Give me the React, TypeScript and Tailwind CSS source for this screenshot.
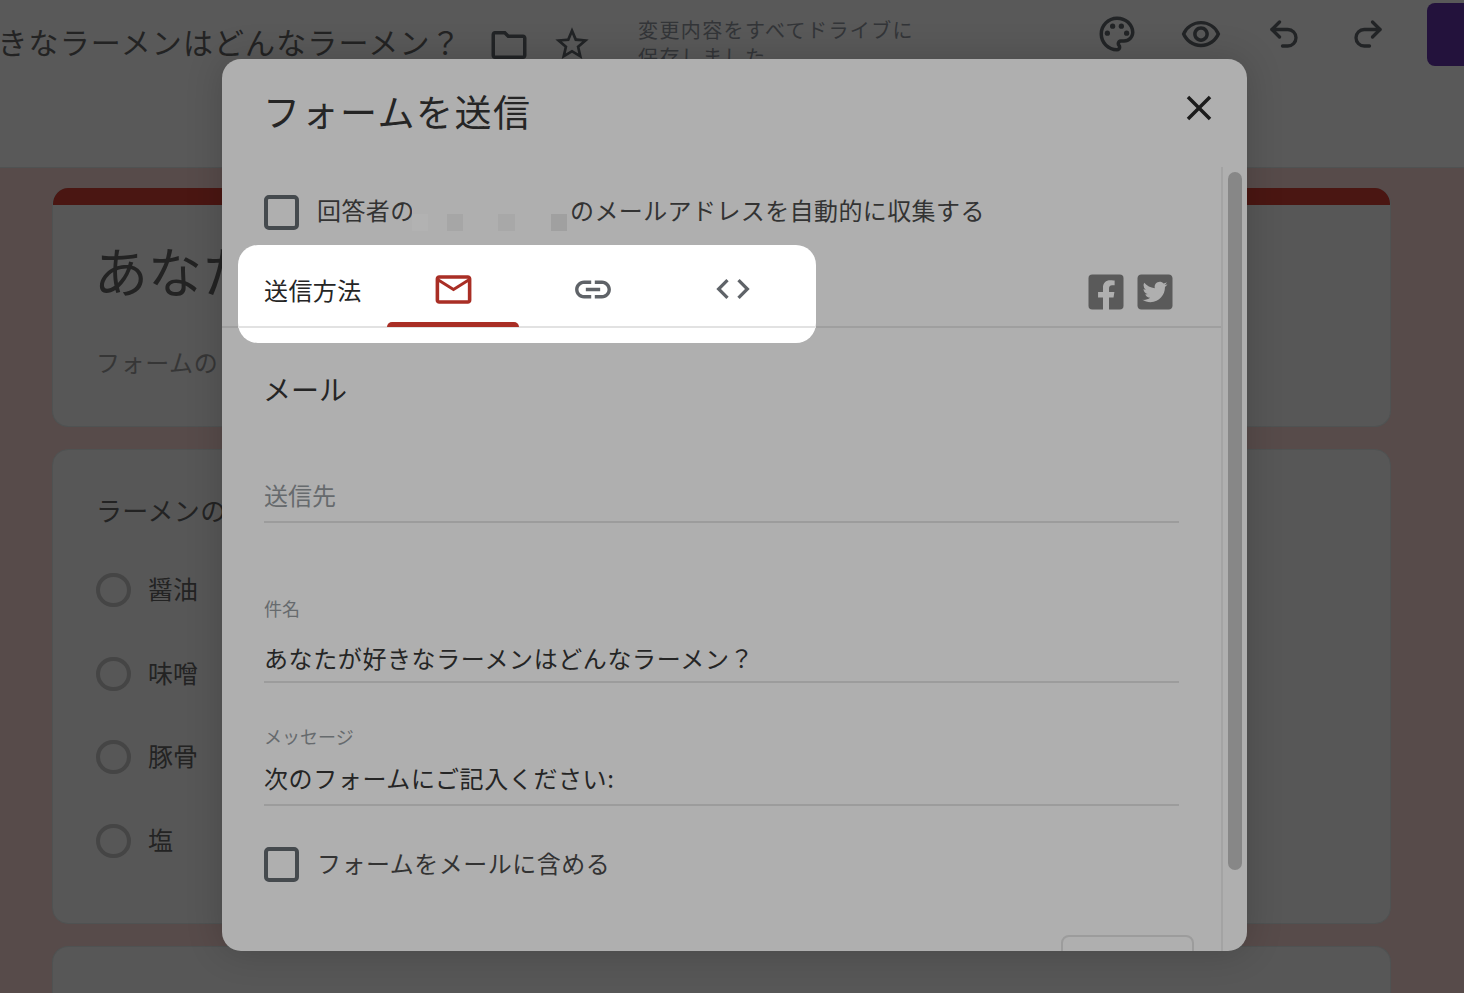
import React from 'react';
import { Redo2, Undo2 } from 'lucide-react';
import {
  MdClose,
  MdCode,
  MdLink,
  MdMailOutline,
  MdOutlineFolder,
  MdOutlinePalette,
  MdOutlineRemoveRedEye,
  MdStarBorder,
} from 'react-icons/md';
import { FaFacebookSquare, FaTwitterSquare } from 'react-icons/fa';

const options = ['醤油', '味噌', '豚骨', '塩'];

const Checkbox = () => (
  <div className="w-[35px] h-[35px] shrink-0 rounded-[5px] border-[4px] border-[#454a4e]" />
);

const Header = () => (
  <header className="h-[168px] shrink-0 bg-[#595959] border-b border-[#4f5252] flex items-start overflow-hidden text-[#232323]">
    <h1 className="w-[614px] shrink-0 ml-[-158px] mt-[21px] text-[30px] leading-[40px] tracking-[1.1px] whitespace-nowrap">
      あなたが好きなラーメンはどんなラーメン？
    </h1>
    <MdOutlineFolder size={42} className="shrink-0 ml-[32px] mt-[24px] text-[#222426]" />
    <MdStarBorder size={40} className="shrink-0 ml-[22px] mt-[24px] text-[#222426]" />
    <p className="w-[280px] shrink-0 ml-[46px] mt-[16px] text-[20px] leading-[27px] tracking-[1.4px] text-[#333538]">
      変更内容をすべてドライブに保存しました
    </p>
    <div className="ml-[178px] mt-[13px] flex items-center gap-[41.5px] text-[#222426]">
      <MdOutlinePalette size={42} />
      <MdOutlineRemoveRedEye size={42} />
      <Undo2 size={36} strokeWidth={2.2} className="mx-[3px]" />
      <Redo2 size={36} strokeWidth={2.2} className="mx-[3px]" />
    </div>
    <div className="w-[37px] h-[63px] ml-auto mt-[3px] shrink-0 rounded-l-[8px] bg-[#23123c]" />
  </header>
);

const Page = () => (
  <main className="flex-1 bg-[#574b4a] pt-[20px] pl-[52px] text-[#232323]">
    <section className="w-[1339px] h-[239px] rounded-[16px] overflow-hidden bg-[#575757] border-x border-b border-[#4f5252]">
      <div className="h-[17px] bg-[#4a1612]" />
      <h2 className="ml-[41px] mt-[33px] text-[54px] leading-[64px] whitespace-nowrap">あなたが好き</h2>
      <p className="ml-[43px] mt-[44px] text-[24px] leading-[32px] tracking-[0.6px] text-[#363636]">
        フォームの
      </p>
    </section>
    <section className="w-[1339px] h-[475px] mt-[22px] rounded-[16px] bg-[#575757] border border-[#4f5252] pl-[43px] pt-[42px]">
      <h3 className="text-[26px] leading-[36px] tracking-[0.3px] whitespace-nowrap">ラーメンの</h3>
      <div className="mt-[45px] flex flex-col gap-[49.5px]">
        {options.map((option) => (
          <div key={option} className="h-[34px] flex items-center gap-[17px]">
            <div className="w-[35px] h-[34px] rounded-full border-[4px] border-[#454545]" />
            <span className="pb-[4px] text-[25px] leading-[34px]">{option}</span>
          </div>
        ))}
      </div>
    </section>
    <section className="w-[1339px] h-[60px] mt-[22px] rounded-t-[16px] bg-[#575757] border-x border-t border-[#4f5252]" />
  </main>
);

const Field = ({
  label,
  value,
  className,
  valueClassName,
}: {
  label: string;
  value: string;
  className: string;
  valueClassName: string;
}) => (
  <div className={className}>
    <div className="text-[18px] leading-[24px] text-[#666a6d]">{label}</div>
    <div className={`border-b-2 border-[#9c9c9c] text-[24px] leading-[34px] tracking-[0.6px] text-[#252525] ${valueClassName}`}>
      {value}
    </div>
  </div>
);

const Dialog = () => (
  <div className="absolute left-[222px] top-[59px] w-[1025px] h-[892px] rounded-[19px] overflow-hidden bg-[#afafaf] shadow-[0_0_36px_rgba(0,0,0,0.18)] flex flex-col text-[#252525]">
    <div className="h-[108px] shrink-0 flex items-start justify-between pl-[41px] pr-[27px]">
      <h2 className="mt-[28px] text-[37px] leading-[48px] tracking-[1.5px]">フォームを送信</h2>
      <MdClose size={42} className="mt-[28px] text-[#1c1c1c]" />
    </div>
    <div className="flex-1 flex min-h-0">
      <div className="w-[1001px] shrink-0 border-r-2 border-[#a3a3a3] overflow-hidden">
        <div className="h-[35px] flex items-center pl-[42px] mt-[28px]">
          <Checkbox />
          <span className="ml-[18px] pb-[5px] w-[95px] overflow-hidden whitespace-nowrap text-[24px] leading-[34px] tracking-[0.4px] text-[#333]">
            回答者の
          </span>
          <div className="w-[158px] h-[34px] flex items-start">
            <div className="mt-[18px] w-[16px] h-[17px] bg-[#b2b2b2]" />
            <div className="mt-[18px] ml-[19px] w-[16px] h-[17px] bg-[#a6a6a6]" />
            <div className="mt-[18px] ml-[35px] w-[17px] h-[17px] bg-[#a8a8a8]" />
            <div className="mt-[18px] ml-[36px] w-[16px] h-[17px] bg-[#a0a0a0]" />
          </div>
          <span className="pb-[5px] whitespace-nowrap text-[24px] leading-[34px] tracking-[0.4px] text-[#333]">
            のメールアドレスを自動的に収集する
          </span>
        </div>
        <div className="h-[98px] border-b-2 border-[#9f9f9f] flex items-start justify-end gap-[9px] pr-[46px] pt-[42px] text-[#5a5a5a]">
          <FaFacebookSquare size={40} />
          <FaTwitterSquare size={40} />
        </div>
        <div className="px-[42px]">
          <h3 className="mt-[42px] -ml-[1px] text-[28px] leading-[38px]">メール</h3>
          <div className="mt-[67px] border-b-2 border-[#9c9c9c] text-[24px] leading-[40px] pb-[6px] text-[#666a6d]">
            送信先
          </div>
          <Field
            label="件名"
            value="あなたが好きなラーメンはどんなラーメン？"
            className="mt-[73px]"
            valueClassName="mt-[21px] pb-[6px]"
          />
          <Field
            label="メッセージ"
            value="次のフォームにご記入ください:"
            className="mt-[41px]"
            valueClassName="mt-[13px] pb-[9px]"
          />
          <div className="h-[35px] flex items-center mt-[41px]">
            <Checkbox />
            <span className="ml-[18px] pb-[4px] text-[24px] leading-[34px] tracking-[0.5px] text-[#333]">
              フォームをメールに含める
            </span>
          </div>
        </div>
        <div className="flex justify-end pr-[27px] mt-[53px]">
          <div className="w-[133px] h-[60px] rounded-[8px] border-2 border-[#9c9c9c]" />
        </div>
      </div>
      <div className="flex-1 pt-[5px] pl-[5px]">
        <div className="w-[14px] h-[698px] rounded-full bg-[#878787]" />
      </div>
    </div>
  </div>
);

const SendTabs = () => (
  <div className="absolute left-[238px] top-[245px] w-[578px] h-[98px] rounded-[20px] bg-white text-[#252525]">
    <div className="h-[83px] border-b-2 border-[#e2e2e2] flex items-start pl-[26px]">
      <span className="w-[119px] mt-[28px] text-[24px] leading-[34px] tracking-[0.4px]">送信方法</span>
      <div className="flex flex-col items-center w-[140px]">
        <MdMailOutline size={43} className="mt-[23px] text-[#a92e25]" />
        <div className="mt-[11px] w-[132px] h-[5px] rounded-t-[5px] bg-[#a92e25]" />
      </div>
      <MdLink size={43} className="w-[140px] mt-[23px] text-[#5f6368]" />
      <MdCode size={40} className="w-[140px] mt-[24px] text-[#5f6368]" />
    </div>
  </div>
);

export default function App() {
  return (
    <div className="relative w-[1464px] h-[993px] overflow-hidden flex flex-col font-['Noto_Sans_CJK_JP','Liberation_Sans',sans-serif]">
      <Header />
      <Page />
      <Dialog />
      <SendTabs />
    </div>
  );
}
